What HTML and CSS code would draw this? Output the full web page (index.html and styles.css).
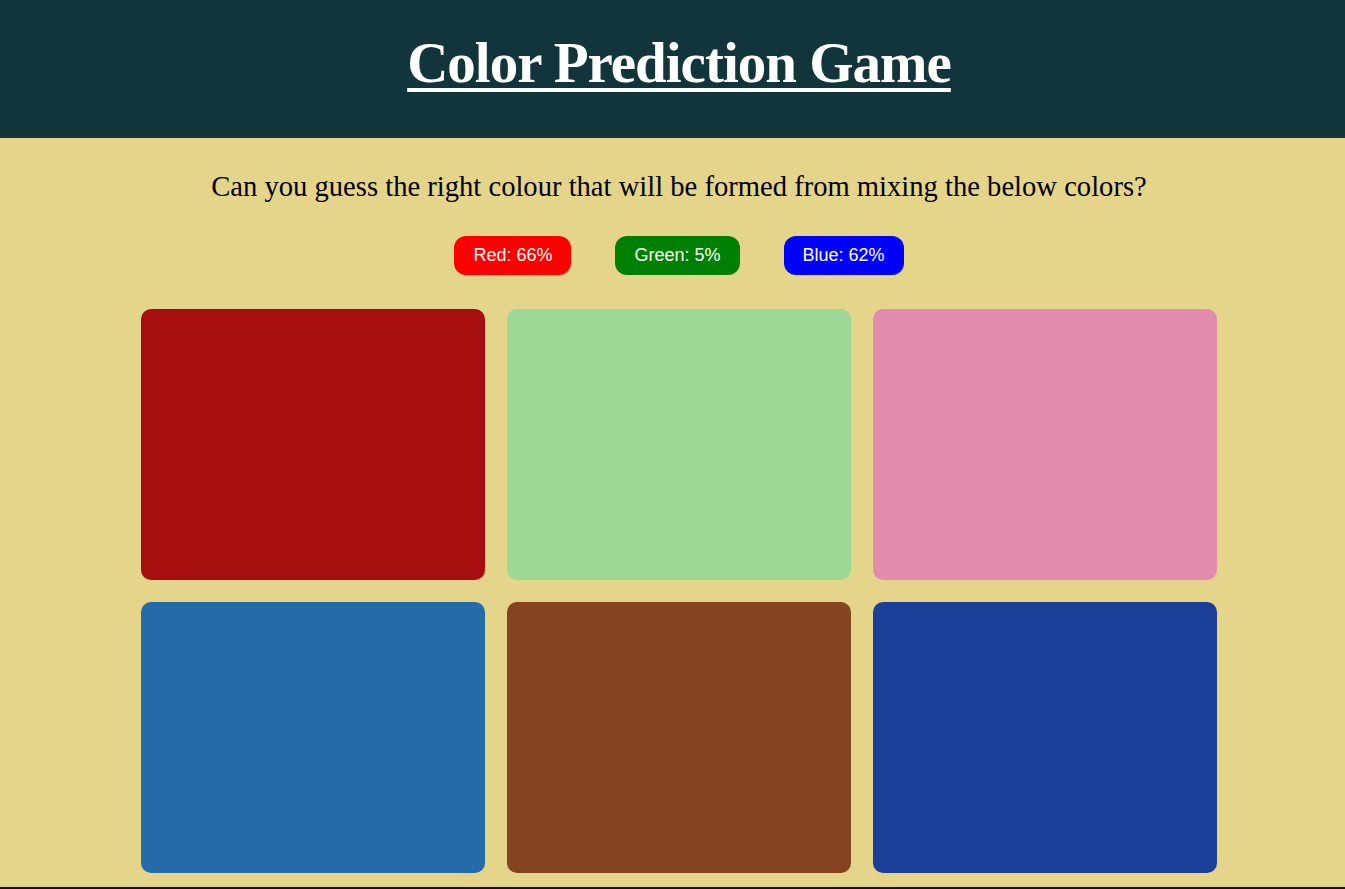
FILE: index.html
```html
<!DOCTYPE html>
<html lang="en">
<head>
<meta charset="utf-8">
<title>Color Prediction Game</title>
<link rel="stylesheet" href="styles.css">
</head>
<body>
<header class="header">
  <h1 class="title">Color Prediction Game</h1>
</header>
<main class="main">
  <p class="question">Can you guess the right colour that will be formed from mixing the below colors?</p>
  <div class="pills">
    <span class="pill pill-red">Red: 66%</span>
    <span class="pill pill-green">Green: 5%</span>
    <span class="pill pill-blue">Blue: 62%</span>
  </div>
  <div class="grid">
    <div class="card" style="background:#a80d0f"></div>
    <div class="card" style="background:#9dd897"></div>
    <div class="card" style="background:#e28bad"></div>
    <div class="card" style="background:#236ca9"></div>
    <div class="card" style="background:#85441f"></div>
    <div class="card" style="background:#1b3e98"></div>
  </div>
</main>
<footer class="footer"></footer>
</body>
</html>
```
FILE: styles.css
```css
html, body {
  margin: 0;
  padding: 0;
}
body {
  background: #e5d58b;
  font-family: "Liberation Serif", "Times New Roman", serif;
}
.header {
  background: #12343b;
  height: 138px;
  padding-left: 13px;
  display: flex;
  justify-content: center;
  align-items: flex-start;
}
.title {
  margin: 29px 0 0;
  color: #fff;
  font-size: 57px;
  font-weight: bold;
  letter-spacing: -1px;
  text-decoration: underline;
  text-decoration-thickness: 4px;
  text-underline-offset: 6px;
  line-height: 68px;
}
.main {
  padding-left: 13px;
  display: flex;
  flex-direction: column;
  align-items: center;
}
.question {
  margin: 32px 0 0;
  font-size: 28.6px;
  line-height: 34px;
  color: #000;
}
.pills {
  margin-top: 32px;
  display: flex;
  gap: 44px;
}
.pill {
  font-family: "Liberation Sans", Arial, sans-serif;
  font-size: 18px;
  color: #fff;
  height: 39px;
  line-height: 39px;
  padding: 0 19px;
  border-radius: 12px;
}
.pill-red { background: #ff0000; }
.pill-green { background: #008000; }
.pill-blue { background: #0000ff; }
.grid {
  margin-top: 34px;
  display: grid;
  grid-template-columns: repeat(3, 344px);
  grid-auto-rows: 271px;
  gap: 22px;
}
.card {
  border-radius: 10px;
}
.footer {
  margin-top: 14px;
  height: 40px;
  background: #111;
}
```
